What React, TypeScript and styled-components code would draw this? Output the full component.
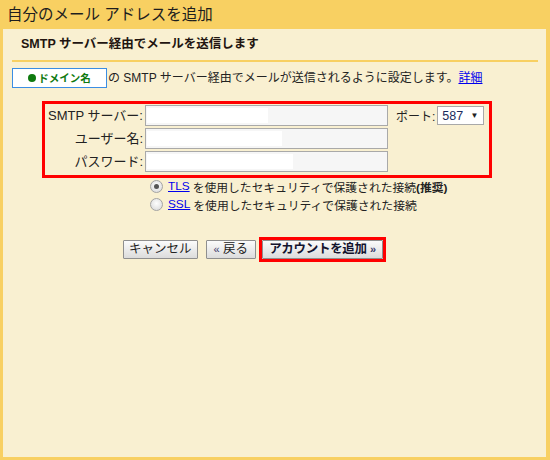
import React from "react";
import styled, { createGlobalStyle } from "styled-components";

const GlobalStyle = createGlobalStyle`
  html, body {
    margin: 0;
    padding: 0;
  }
  body {
    font-family: "Liberation Sans", "Noto Sans CJK JP", sans-serif;
    font-size: 12px;
    color: #222;
  }
`;

const colors = {
  frame: "#f8d062",
  panel: "#f9f0d1",
  red: "#ff0000",
  link: "#0000ee",
};

interface FieldProps {
  label: string;
  fill: number;
}

const fields: FieldProps[] = [
  { label: "SMTP サーバー:", fill: 121 },
  { label: "ユーザー名:", fill: 135 },
  { label: "パスワード:", fill: 146 },
];

const App = () => {
  return (
    <>
      <GlobalStyle />
      <Frame>
        <Title>自分のメール アドレスを追加</Title>
        <Panel>
          <Subtitle>SMTP サーバー経由でメールを送信します</Subtitle>
          <Divider />
          <Intro>
            <DomainTag>
              <Dot />
              ドメイン名
            </DomainTag>
            <span>
              の SMTP サーバー経由でメールが送信されるように設定します。
              <Link href="#">詳細</Link>
            </span>
          </Intro>

          <Highlight>
            <FormGrid>
              {fields.map((f, i) => (
                <React.Fragment key={f.label}>
                  <Label>{f.label}</Label>
                  <Input $fill={f.fill} />
                  {i === 0 ? (
                    <PortCell>
                      <span>ポート:</span>
                      <Select>
                        <span>587</span>
                        <Arrow>▼</Arrow>
                      </Select>
                    </PortCell>
                  ) : (
                    <span />
                  )}
                </React.Fragment>
              ))}
            </FormGrid>
          </Highlight>

          <Options>
            <OptionRow>
              <Radio $checked />
              <Link href="#">TLS</Link>
              <span>
                を使用したセキュリティで保護された接続<b>(推奨)</b>
              </span>
            </OptionRow>
            <OptionRow>
              <Radio />
              <Link href="#">SSL</Link>
              <span>を使用したセキュリティで保護された接続</span>
            </OptionRow>
          </Options>

          <Actions>
            <Button $pad={5}>キャンセル</Button>
            <Button $pad={7}>
              <Chevron>«</Chevron> 戻る
            </Button>
            <PrimaryWrap>
              <Button $primary $pad={6}>
                アカウントを追加 <Chevron>»</Chevron>
              </Button>
            </PrimaryWrap>
          </Actions>
        </Panel>
      </Frame>
    </>
  );
};

const Frame = styled.div`
  width: 550px;
  height: 460px;
  box-sizing: border-box;
  background: ${colors.frame};
  padding: 0 4px 3px 3px;
  display: flex;
  flex-direction: column;
`;

const Title = styled.div`
  height: 29px;
  line-height: 29px;
  padding-left: 4px;
  font-size: 15.5px;
  color: #1e1e1e;
`;

const Panel = styled.div`
  flex: 1;
  background: ${colors.panel};
  padding: 0 8px 0 9px;
`;

const Subtitle = styled.div`
  padding: 6px 0 0 9px;
  height: 18px;
  line-height: 18px;
  font-size: 12.5px;
  font-weight: bold;
  color: #221510;
`;

const Divider = styled.div`
  height: 2px;
  margin-top: 7px;
  background: ${colors.frame};
`;

const Intro = styled.div`
  display: flex;
  align-items: center;
  gap: 1px;
  margin-top: 6px;
  line-height: 20px;
  font-size: 12px;
`;

const DomainTag = styled.div`
  width: 95px;
  height: 20px;
  box-sizing: border-box;
  border: 1px solid #3b8ee4;
  background: #fff;
  color: #0f7a0f;
  font-weight: bold;
  font-size: 10.5px;
  display: flex;
  align-items: center;
  justify-content: center;
`;

const Dot = styled.span`
  width: 8px;
  height: 8px;
  border-radius: 50%;
  background: #0f7a0f;
  margin-right: 2px;
`;

const Link = styled.a`
  color: ${colors.link};
  text-decoration: underline;
`;

const Highlight = styled.div`
  width: 450px;
  box-sizing: border-box;
  margin: 13px 0 0 30px;
  border: 3px solid ${colors.red};
  padding: 1px 0 3px 0;
`;

const FormGrid = styled.div`
  display: grid;
  grid-template-columns: 98px 243px auto;
  grid-auto-rows: 21px;
  column-gap: 2px;
  row-gap: 2px;
  align-items: center;
`;

const Label = styled.div`
  text-align: right;
  font-size: 13px;
  line-height: 21px;
  white-space: nowrap;
`;

const Input = styled.div<{ $fill: number }>`
  height: 21px;
  box-sizing: border-box;
  border: 1px solid #a9a9a9;
  background: #f6f6f6 linear-gradient(#fff, #fff) no-repeat 1px 2px /
    ${(p) => p.$fill}px 15px;
`;

const PortCell = styled.div`
  display: flex;
  align-items: center;
  gap: 2px;
  padding-left: 6px;
  font-size: 12px;
`;

const Select = styled.div`
  width: 47px;
  height: 19px;
  box-sizing: border-box;
  border: 1px solid #a9a9a9;
  background: #fff;
  display: flex;
  align-items: center;
  justify-content: space-between;
  padding: 0 5px 0 4px;
  font-size: 12.5px;
  color: #1a2b5c;
`;

const Arrow = styled.span`
  font-size: 8px;
  color: #222;
`;

const Options = styled.div`
  margin: -1px 0 0 138px;
  display: flex;
  flex-direction: column;
`;

const OptionRow = styled.div`
  display: flex;
  align-items: center;
  height: 18px;
  gap: 3px;
  font-size: 11.8px;

  b {
    font-weight: bold;
  }
`;

const Radio = styled.span<{ $checked?: boolean }>`
  width: 11px;
  height: 11px;
  border-radius: 50%;
  border: 1px solid #a4a4a4;
  background: radial-gradient(circle at 50% 40%, #fefefe, #d6d6d6);
  position: relative;
  margin-right: 2px;

  &::after {
    content: "";
    display: ${(p) => (p.$checked ? "block" : "none")};
    position: absolute;
    left: 3px;
    top: 3px;
    width: 5px;
    height: 5px;
    border-radius: 50%;
    background: #555;
  }
`;

const Actions = styled.div`
  display: flex;
  align-items: center;
  gap: 8px;
  margin: 24px 0 0 111px;
`;

const Button = styled.div<{ $primary?: boolean; $pad: number }>`
  height: 19px;
  box-sizing: border-box;
  padding: 0 ${(p) => p.$pad}px;
  border: 1px solid #8f8f8f;
  border-radius: 1px;
  background: linear-gradient(#fbfbfb, #dcdcdc);
  font-size: 12.5px;
  line-height: 17px;
  color: ${(p) => (p.$primary ? "#14142e" : "#222")};
  font-weight: ${(p) => (p.$primary ? "bold" : "normal")};
  letter-spacing: ${(p) => (p.$primary ? "-0.3px" : "0")};
  white-space: nowrap;
`;

const Chevron = styled.span`
  font-size: 11px;
  color: #3a3a6a;
`;

const PrimaryWrap = styled.div`
  border: 3px solid ${colors.red};
  margin-left: -5px;
`;

export default App;
